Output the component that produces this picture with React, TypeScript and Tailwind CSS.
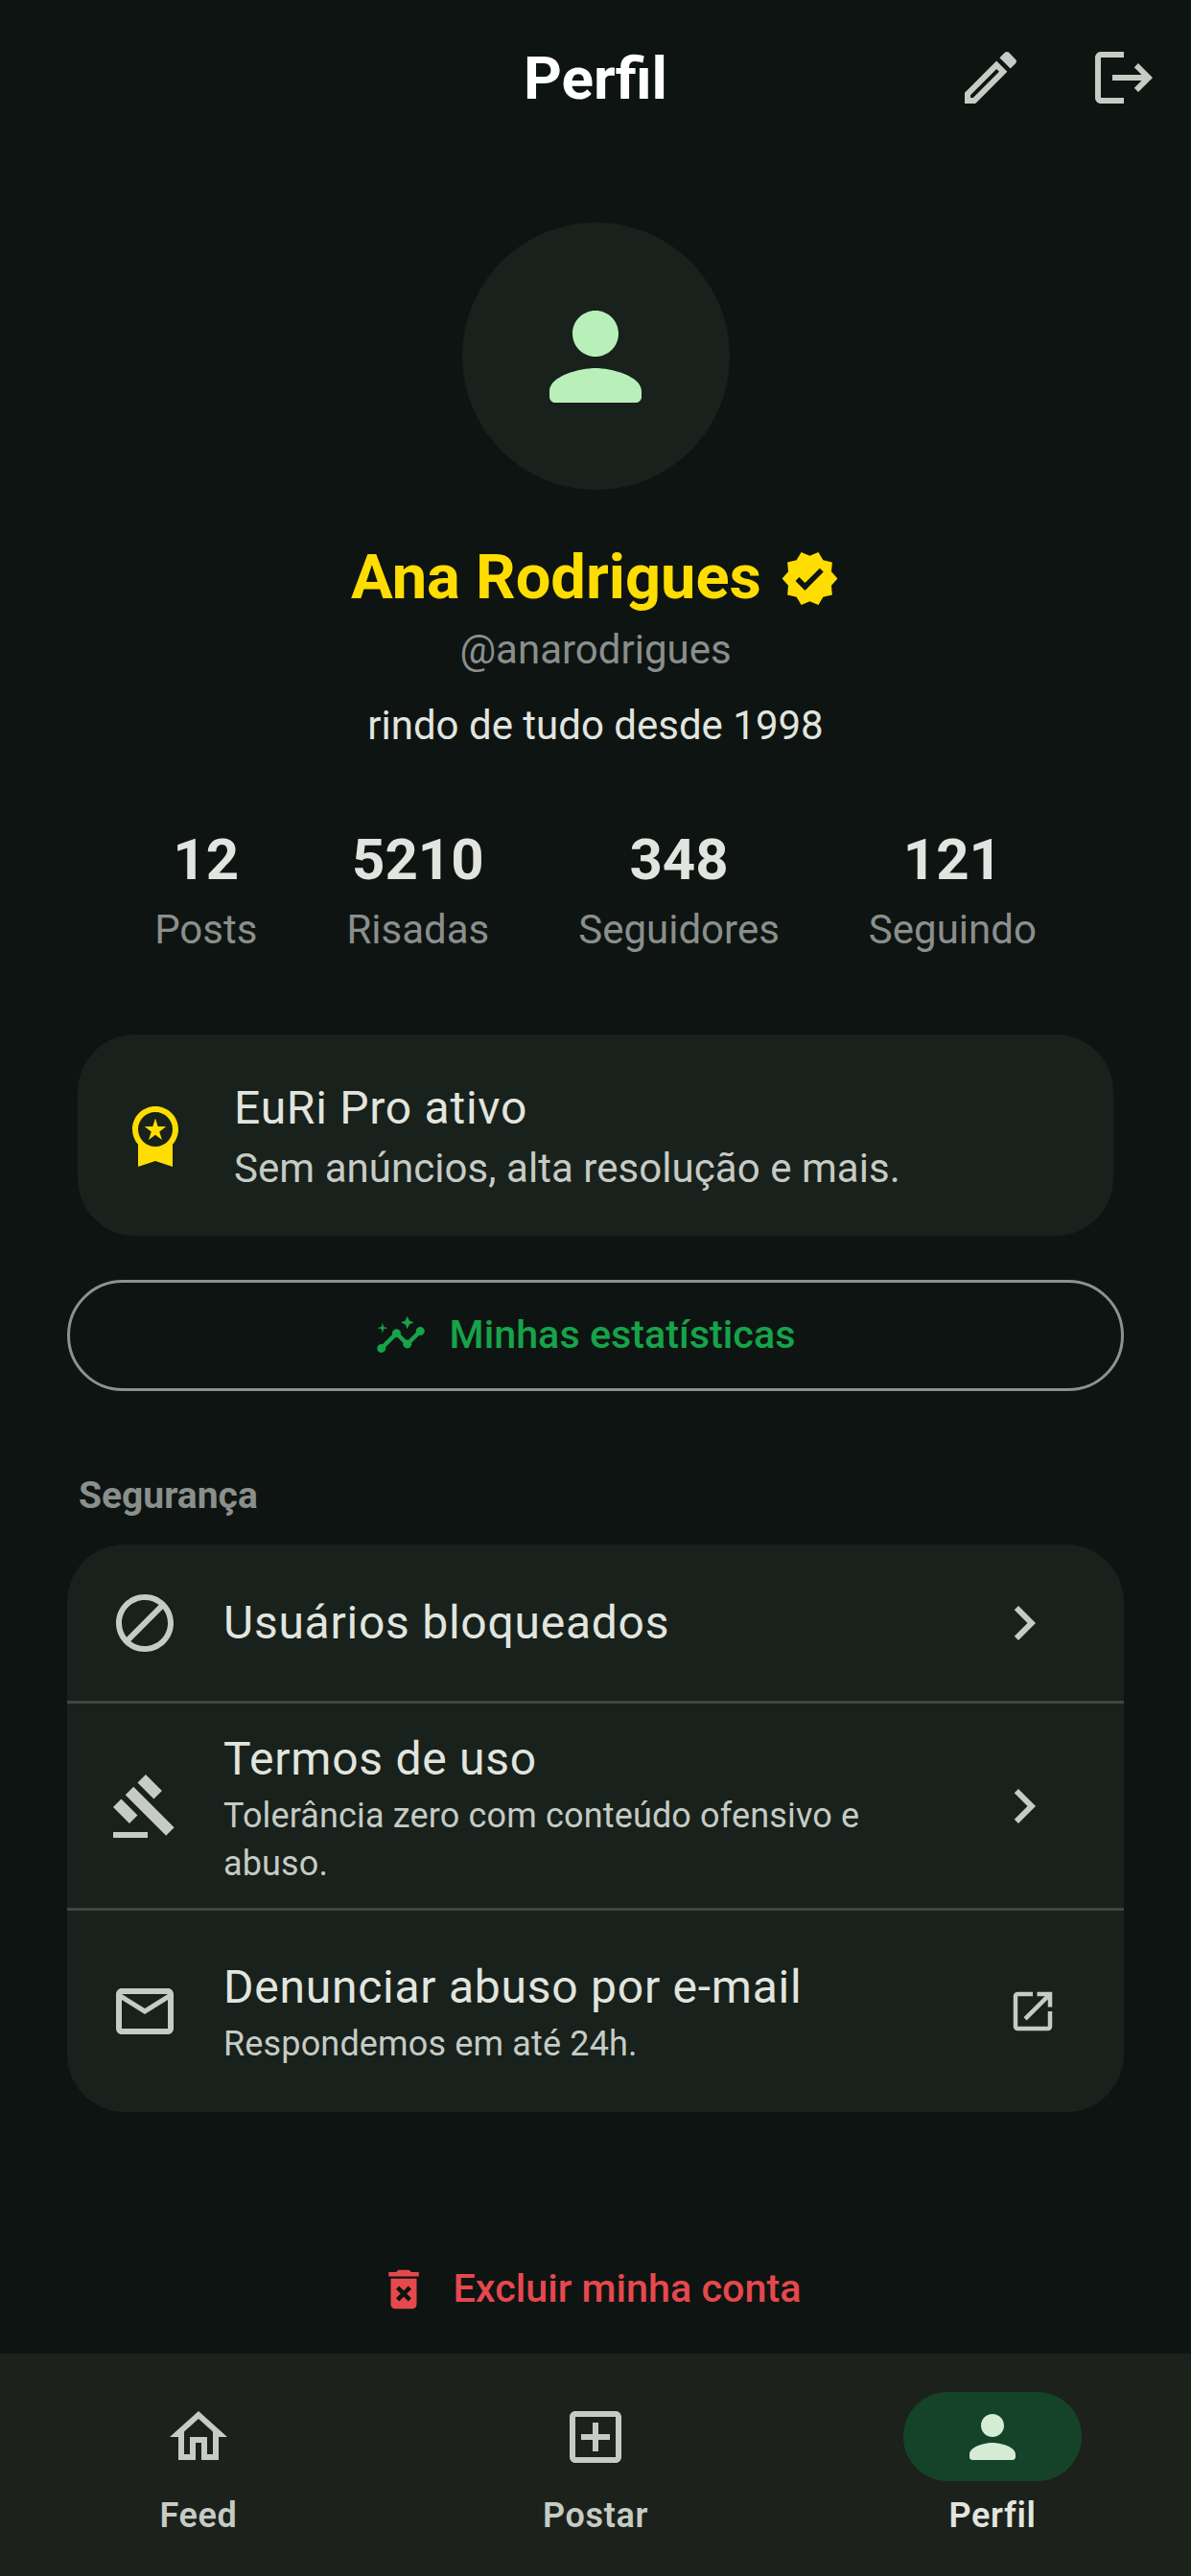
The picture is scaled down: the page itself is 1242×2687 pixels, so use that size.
const paths = {
  edit: "M14.06 9.02l.92.92L5.92 19H5v-.92l9.06-9.06M17.66 3c-.25 0-.51.1-.7.29l-1.83 1.83 3.75 3.75 1.83-1.83c.39-.39.39-1.02 0-1.41l-2.34-2.34c-.2-.2-.45-.29-.71-.29zm-3.6 3.19L3 17.25V21h3.75L17.81 9.94l-3.75-3.75z",
  logout: "M17 7l-1.41 1.41L18.17 11H8v2h10.17l-2.58 2.58L17 17l5-5zM4 5h8V3H4c-1.1 0-2 .9-2 2v14c0 1.1.9 2 2 2h8v-2H4V5z",
  person: "M12 12c2.21 0 4-1.79 4-4s-1.79-4-4-4-4 1.79-4 4 1.79 4 4 4zm0 2c-2.67 0-8 1.34-8 4v1c0 .55.45 1 1 1h14c.55 0 1-.45 1-1v-1c0-2.66-5.33-4-8-4z",
  verified: "M23 12l-2.44-2.79.34-3.69-3.61-.82-1.89-3.2L12 2.96 8.6 1.5 6.71 4.69 3.1 5.5l.34 3.7L1 12l2.44 2.79-.34 3.7 3.61.82L8.6 22.5l3.4-1.47 3.4 1.46 1.89-3.19 3.61-.82-.34-3.69L23 12zm-12.91 4.72l-3.8-3.81 1.48-1.48 2.32 2.33 5.85-5.87 1.48 1.48-7.33 7.35z",
  premium: "M9.68 13.69 12 11.93l2.31 1.76-.88-2.85L15.75 9h-2.84L12 6.19 11.09 9H8.25l2.31 1.84-.88 2.85zM20 10c0-4.42-3.58-8-8-8s-8 3.58-8 8c0 2.03.76 3.87 2 5.28V23l6-2 6 2v-7.72c1.24-1.41 2-3.25 2-5.28zm-8-6c3.31 0 6 2.69 6 6s-2.69 6-6 6-6-2.69-6-6 2.69-6 6-6z",
  insights: "M21 8c-1.45 0-2.26 1.44-1.93 2.51l-3.55 3.56c-.3-.09-.74-.09-1.04 0l-2.55-2.55C12.27 10.45 11.46 9 10 9c-1.45 0-2.27 1.44-1.93 2.52l-4.56 4.55C2.44 15.74 1 16.55 1 18c0 1.1.9 2 2 2 1.45 0 2.26-1.44 1.93-2.51l4.55-4.56c.3.09.74.09 1.04 0l2.55 2.55C12.73 16.55 13.54 18 15 18c1.45 0 2.27-1.44 1.93-2.52l3.56-3.55c1.07.33 2.51-.48 2.51-1.93 0-1.1-.9-2-2-2zM15 9l.94-2.07L18 6l-2.06-.93L15 3l-.92 2.07L12 6l2.08.93zM3.5 11L4 9l2-.5L4 8l-.5-2L3 8l-2 .5L3 9z",
  block: "M12 2C6.48 2 2 6.48 2 12s4.48 10 10 10 10-4.48 10-10S17.52 2 12 2zM4 12c0-4.42 3.58-8 8-8 1.85 0 3.55.63 4.9 1.69L5.69 16.9C4.63 15.55 4 13.85 4 12zm8 8c-1.85 0-3.55-.63-4.9-1.69L18.31 7.1C19.37 8.45 20 10.15 20 12c0 4.42-3.58 8-8 8z",
  gavel: "M1 21h12v2H1zM5.245 8.07l2.83-2.827 14.14 14.142-2.828 2.828zM12.317 1l5.657 5.656-2.83 2.83-5.654-5.66zM3.825 9.485l5.657 5.657-2.828 2.828-5.657-5.657z",
  mail: "M20 4H4c-1.1 0-1.99.9-1.99 2L2 18c0 1.1.9 2 2 2h16c1.1 0 2-.9 2-2V6c0-1.1-.9-2-2-2zm0 14H4V8l8 5 8-5v10zm-8-7L4 6h16l-8 5z",
  chevron: "M10 6L8.59 7.41 13.17 12l-4.58 4.59L10 18l6-6z",
  external: "M19 19H5V5h7V3H5c-1.11 0-2 .9-2 2v14c0 1.1.89 2 2 2h14c1.1 0 2-.9 2-2v-7h-2v7zM14 3v2h3.59l-9.83 9.83 1.41 1.41L19 6.41V10h2V3h-7z",
  trash: "M6 19c0 1.1.9 2 2 2h8c1.1 0 2-.9 2-2V7H6v12zm2.46-7.12l1.41-1.41L12 12.59l2.12-2.12 1.41 1.41L13.41 14l2.12 2.12-1.41 1.41L12 15.41l-2.12 2.12-1.41-1.41L10.59 14l-2.13-2.12zM15.5 4l-1-1h-5l-1 1H5v2h14V4z",
  home: "M12 5.69l5 4.5V18h-2v-6H9v6H7v-7.81l5-4.5M12 3L2 12h3v8h6v-6h2v6h6v-8h3L12 3z",
  addBox: "M19 3H5c-1.11 0-2 .9-2 2v14c0 1.1.89 2 2 2h14c1.1 0 2-.9 2-2V5c0-1.1-.9-2-2-2zm0 16H5V5h14v14zm-8-2h2v-4h4v-2h-4V7h-2v4H7v2h4z",
};

function Icon({ name, className }: { name: keyof typeof paths; className: string }) {
  return (
    <svg viewBox="0 0 24 24" fill="currentColor" className={`shrink-0 ${className}`}>
      <path d={paths[name]} />
    </svg>
  );
}

const stats = [
  { value: "12", label: "Posts" },
  { value: "5210", label: "Risadas" },
  { value: "348", label: "Seguidores" },
  { value: "121", label: "Seguindo" },
];

function SecurityRow({
  icon,
  title,
  lines,
  trailing,
  className,
  textClassName = "",
}: {
  icon: keyof typeof paths;
  title: string;
  lines?: string;
  trailing: React.ReactNode;
  className: string;
  textClassName?: string;
}) {
  return (
    <div className={`flex items-center pl-[45px] pr-[68px] ${className}`}>
      <Icon name={icon} className="size-[72px] text-[#c6cbc4]" />
      <div className={`ml-[46px] flex-1 min-w-0 ${textClassName}`}>
        <p className="text-[48px] leading-[60px] tracking-[0.75px] text-[#e2e5df]">{title}</p>
        {lines && (
          <p className="mt-[4px] w-[700px] text-[36px] leading-[50px] tracking-[0.15px] text-[#c6cbc4]">{lines}</p>
        )}
      </div>
      {trailing}
    </div>
  );
}

function NavItem({ icon, label, active }: { icon: keyof typeof paths; label: string; active?: boolean }) {
  return (
    <div className="flex w-[414px] flex-col items-center">
      <div className={`flex h-[93px] w-[186px] items-center justify-center rounded-full ${active ? "bg-[#14432a]" : ""}`}>
        <Icon name={icon} className={`size-[72px] ${active ? "text-[#d3ecd3]" : "text-[#c6cbc4]"}`} />
      </div>
      <span className={`mt-[12px] text-[36px] leading-[48px] font-semibold tracking-[0.65px] ${active ? "text-[#e2e5df]" : "text-[#c6cbc4]"}`}>
        {label}
      </span>
    </div>
  );
}

export default function App() {
  return (
    <div className="flex h-[2687px] flex-col bg-[#0e1412] font-['Roboto',sans-serif]">
      <main className="flex flex-1 flex-col items-center">
        {/* App bar */}
        <header className="grid h-[162px] w-full grid-cols-3 items-center">
          <div />
          <h1 className="text-center text-[62px] font-bold text-white">Perfil</h1>
          <div className="flex items-center justify-end gap-[67px] pr-[34px] text-[#c6cbc4]">
            <Icon name="edit" className="size-[72px]" />
            <Icon name="logout" className="size-[72px]" />
          </div>
        </header>

        <div className="mt-[70px] flex size-[279px] items-center justify-center rounded-full bg-[#18211c]">
          <Icon name="person" className="size-[144px] text-[#b9efb9]" />
        </div>

        <div className="mt-[50px] flex h-[84px] items-center gap-[19px]">
          <span className="text-[65px] font-bold text-[#ffdd00]">Ana Rodrigues</span>
          <Icon name="verified" className="size-[63px] text-[#ffdd00]" />
        </div>
        <p className="mt-[3px] text-[42px] leading-[60px] text-[#8a8f8c]">@anarodrigues</p>
        <p className="mt-[19px] text-[42px] leading-[60px] text-[#e2e5df]">rindo de tudo desde 1998</p>

        {/* Counters */}
        <div className="mt-[74px] flex justify-center gap-[93px]">
          {stats.map((s) => (
            <div key={s.label} className="flex flex-col items-center">
              <span className="text-[60px] leading-[72px] font-bold text-[#e2e5df]">{s.value}</span>
              <span className="mt-[7px] text-[42px] leading-[60px] text-[#8a8f8c]">{s.label}</span>
            </div>
          ))}
        </div>

        {/* Subscription card */}
        <div className="mt-[79px] flex h-[210px] w-[1080px] items-center rounded-[60px] bg-[#18211c] pl-[45px]">
          <Icon name="premium" className="size-[72px] text-[#ffdd00]" />
          <div className="ml-[46px] flex flex-col gap-[3px] pt-[6px]">
            <span className="text-[48px] leading-[60px] tracking-[0.75px] text-[#e2e5df]">EuRi Pro ativo</span>
            <span className="text-[42px] leading-[60px] tracking-[0.05px] text-[#c6cbc4]">Sem anúncios, alta resolução e mais.</span>
          </div>
        </div>

        <button className="mt-[46px] flex h-[116px] w-[1102px] items-center justify-center gap-[24px] rounded-full border-[3px] border-[#8e928e] pr-[22px] text-[#16a34a]">
          <Icon name="insights" className="size-[54px]" />
          <span className="text-[41.3px] font-medium">Minhas estatísticas</span>
        </button>

        <div className="mt-[82px] w-[1078px] text-[39px] leading-[54px] font-bold text-[#8a8f8c]">Segurança</div>

        {/* Security list */}
        <section className="mt-[24px] w-[1102px] overflow-hidden rounded-[60px] bg-[#18211c]">
          <SecurityRow
            icon="block"
            title="Usuários bloqueados"
            className="h-[163px]"
            trailing={<Icon name="chevron" className="size-[72px] text-[#c6cbc4]" />}
          />
          <SecurityRow
            icon="gavel"
            title="Termos de uso"
            lines="Tolerância zero com conteúdo ofensivo e abuso."
            className="h-[216px] border-t-[3px] border-[#3f4742]"
            textClassName="pt-[7px]"
            trailing={<Icon name="chevron" className="size-[72px] text-[#c6cbc4]" />}
          />
          <SecurityRow
            icon="mail"
            title="Denunciar abuso por e-mail"
            lines="Respondemos em até 24h."
            className="h-[213px] border-t-[3px] border-[#3f4742]"
            textClassName="pt-[3px]"
            trailing={<Icon name="external" className="size-[54px] text-[#c6cbc4]" />}
          />
        </section>

        <div className="mt-[149px] mr-[12px] flex h-[72px] items-center gap-[24px] text-[#e5484d]">
          <Icon name="trash" className="size-[54px]" />
          <span className="text-[41.3px] font-medium">Excluir minha conta</span>
        </div>
      </main>

      {/* Bottom navigation */}
      <nav className="flex h-[232px] bg-[#1c211c] pt-[40px]">
        <NavItem icon="home" label="Feed" />
        <NavItem icon="addBox" label="Postar" />
        <NavItem icon="person" label="Perfil" active />
      </nav>
    </div>
  );
}
